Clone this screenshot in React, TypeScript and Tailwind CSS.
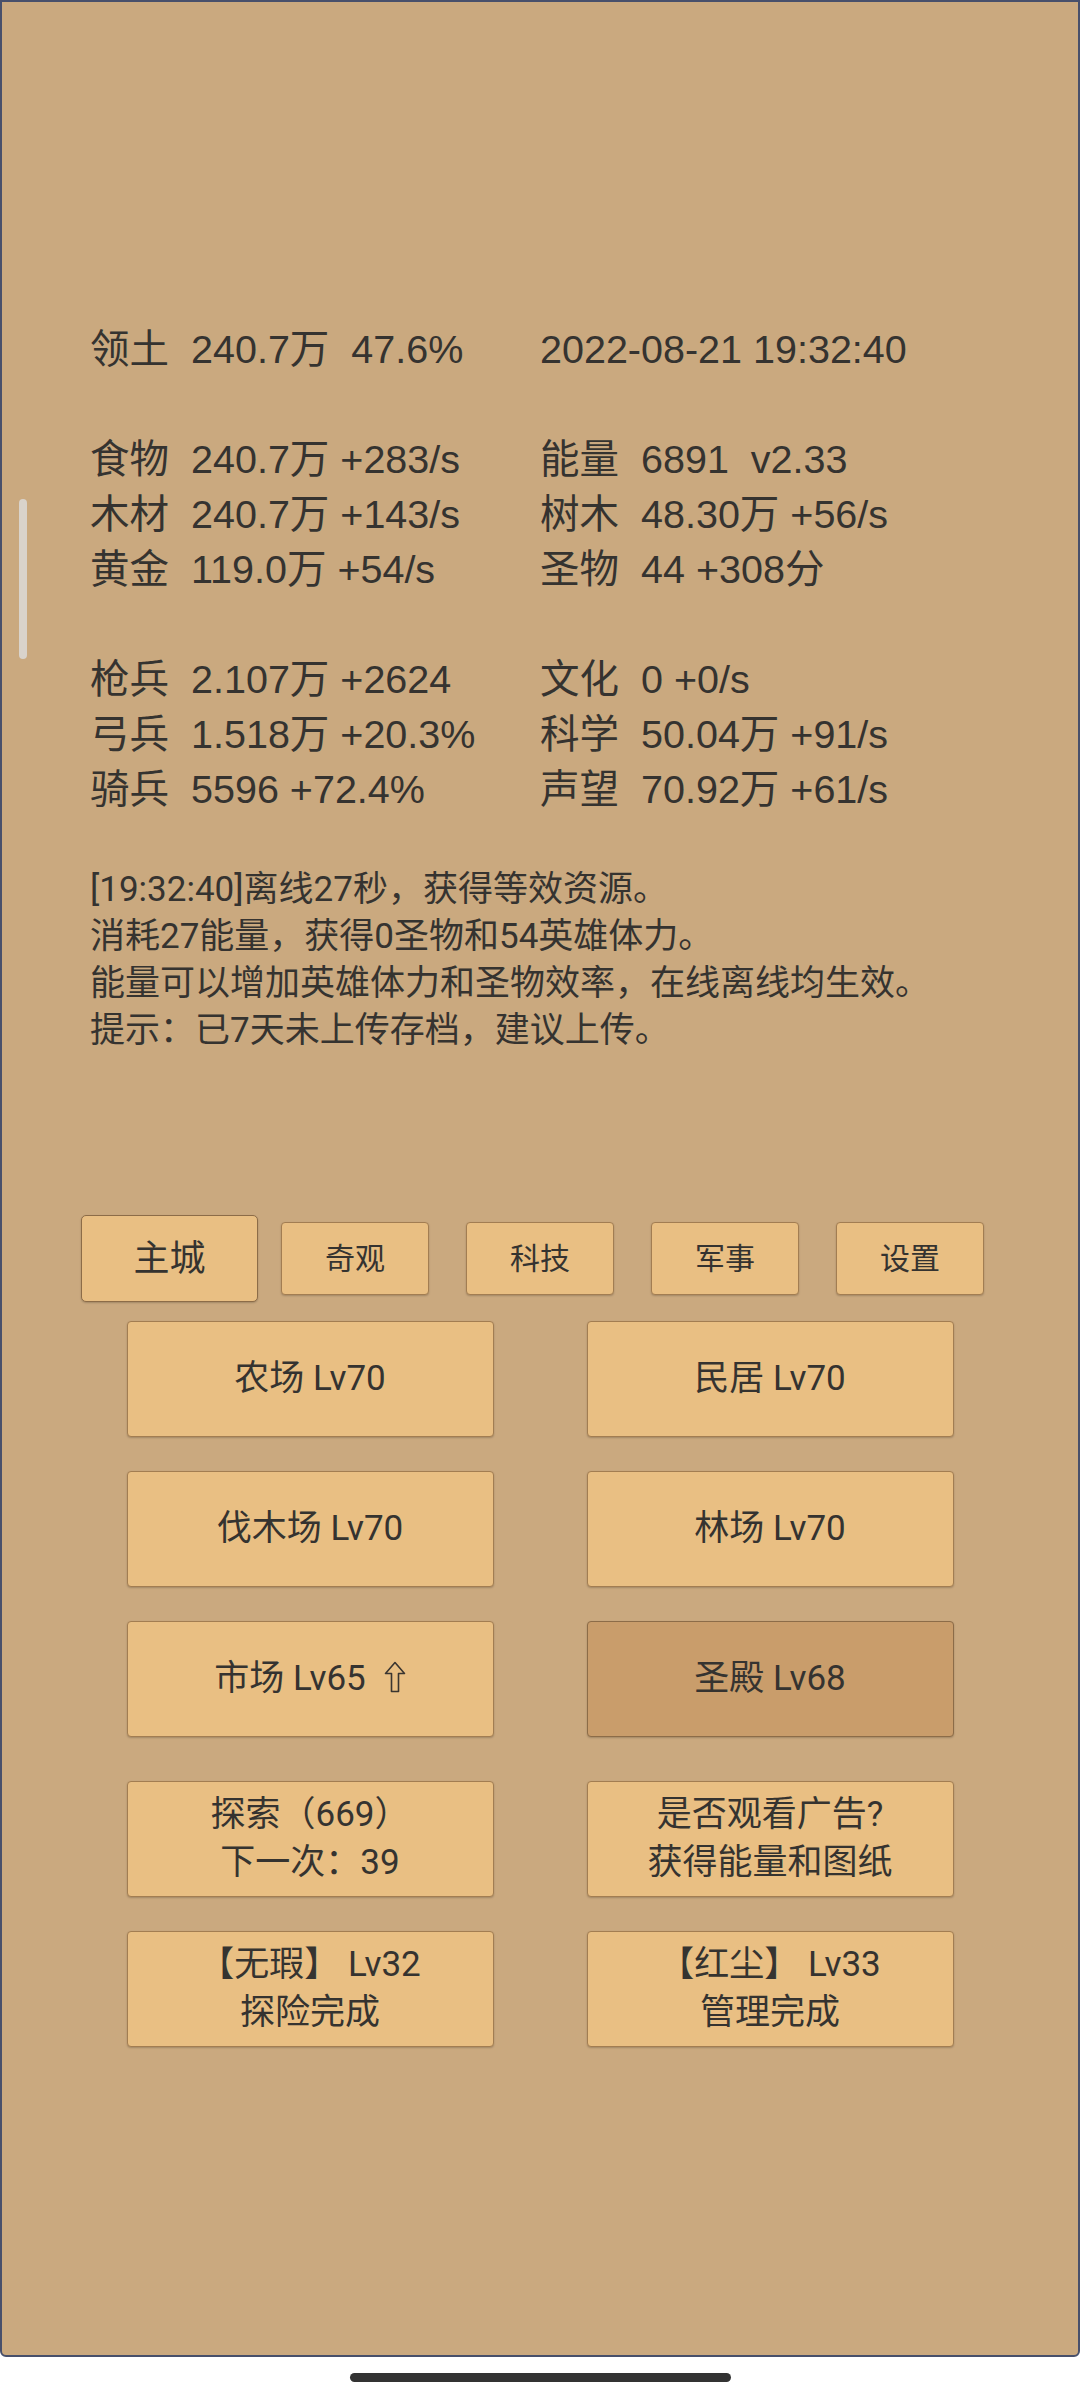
import { ReactNode } from 'react';

type Stat = { label?: string; value: string } | null;

const left: Stat[] = [
  { label: '领土', value: '240.7万  47.6%' },
  null,
  { label: '食物', value: '240.7万 +283/s' },
  { label: '木材', value: '240.7万 +143/s' },
  { label: '黄金', value: '119.0万 +54/s' },
  null,
  { label: '枪兵', value: '2.107万 +2624' },
  { label: '弓兵', value: '1.518万 +20.3%' },
  { label: '骑兵', value: '5596 +72.4%' },
];

const right: Stat[] = [
  { value: '2022-08-21 19:32:40' },
  null,
  { label: '能量', value: '6891  v2.33' },
  { label: '树木', value: '48.30万 +56/s' },
  { label: '圣物', value: '44 +308分' },
  null,
  { label: '文化', value: '0 +0/s' },
  { label: '科学', value: '50.04万 +91/s' },
  { label: '声望', value: '70.92万 +61/s' },
];

const logLines = [
  '[19:32:40]离线27秒，获得等效资源。',
  '消耗27能量，获得0圣物和54英雄体力。',
  '能量可以增加英雄体力和圣物效率，在线离线均生效。',
  '提示：已7天未上传存档，建议上传。',
];

const tabs = ['奇观', '科技', '军事', '设置'];

const UpArrow = () => (
  <svg width="22" height="32" viewBox="0 0 22 32" className="inline-block ml-[18px] -mt-[4px]">
    <path
      d="M11 1.5 L20.5 12.5 L14.5 12.5 L14.5 30.5 L7.5 30.5 L7.5 12.5 L1.5 12.5 Z"
      fill="none"
      stroke="#3a3530"
      strokeWidth="1.6"
      strokeLinejoin="round"
    />
  </svg>
);

const Cell = ({ stat }: { stat: Stat }) => {
  if (!stat) return <div className="h-[55px]" />;
  return (
    <div className="flex h-[55px] items-center whitespace-pre">
      {stat.label && <span className="w-[101px] shrink-0">{stat.label}</span>}
      <span>{stat.value}</span>
    </div>
  );
};

const BuildButton = ({
  children,
  active = false,
}: {
  children: ReactNode;
  active?: boolean;
}) => (
  <div
    className={
      active
        ? 'h-[116px] flex flex-col items-center justify-center rounded-[4px] border border-[#8c6c48] bg-[#c99d6b] text-[35px] leading-[48px] shadow-[0_1px_2px_rgba(0,0,0,0.2)]'
        : 'h-[116px] flex flex-col items-center justify-center rounded-[4px] border border-[#a27d52] bg-[#e9bf83] text-[35px] leading-[48px] shadow-[0_1px_2px_rgba(0,0,0,0.2)]'
    }
  >
    {children}
  </div>
);

const App = () => {
  return (
    <div className="relative min-h-[2400px] bg-white font-['Roboto','Noto_Sans_CJK_SC',sans-serif] text-[#353330]">
      <div className="relative h-[2357px] overflow-hidden rounded-b-[6px] border-2 border-[#48506b] bg-[#caa97f]">
        {/* scroll thumb */}
        <div className="absolute left-[17px] top-[497px] h-[160px] w-[8px] rounded-full bg-[#d9d3cb]" />

        <div className="pl-[88px] pt-[320px] font-['Liberation_Sans','Noto_Sans_CJK_SC',sans-serif] text-[39.5px]">
          {left.map((s, i) => (
            <div key={i} className="flex">
              <div className="w-[450px] shrink-0">
                <Cell stat={s} />
              </div>
              <Cell stat={right[i]} />
            </div>
          ))}
        </div>

        <div className="mt-[49px] pl-[88px] text-[35px] leading-[47px]">
          {logLines.map((l) => (
            <div key={l}>{l}</div>
          ))}
        </div>

        <div className="mt-[161px] flex items-center pl-[79px]">
          <div className="flex h-[87px] w-[177px] items-center justify-center rounded-[5px] border border-[#8c6c48] bg-[#e9bf83] text-[36px] shadow-[0_1px_2px_rgba(0,0,0,0.2)]">
            主城
          </div>
          <div className="ml-[23px] flex gap-[37px]">
            {tabs.map((t) => (
              <div
                key={t}
                className="flex h-[73px] w-[148px] items-center justify-center rounded-[4px] border border-[#a27d52] bg-[#e9bf83] text-[30px] shadow-[0_1px_2px_rgba(0,0,0,0.2)]"
              >
                {t}
              </div>
            ))}
          </div>
        </div>

        <div className="mx-auto mt-[19px] grid w-[827px] grid-cols-2 gap-x-[93px] gap-y-[34px]">
          <BuildButton>农场 Lv70</BuildButton>
          <BuildButton>民居 Lv70</BuildButton>
          <BuildButton>伐木场 Lv70</BuildButton>
          <BuildButton>林场 Lv70</BuildButton>
          <BuildButton>
            <span className="flex items-center">
              市场 Lv65
              <UpArrow />
            </span>
          </BuildButton>
          <BuildButton active>圣殿 Lv68</BuildButton>
        </div>

        <div className="mx-auto mt-[44px] grid w-[827px] grid-cols-2 gap-x-[93px] gap-y-[34px]">
          <BuildButton>
            <span>探索（669）</span>
            <span>下一次：39</span>
          </BuildButton>
          <BuildButton>
            <span>是否观看广告?</span>
            <span>获得能量和图纸</span>
          </BuildButton>
          <BuildButton>
            <span>【无瑕】 Lv32</span>
            <span>探险完成</span>
          </BuildButton>
          <BuildButton>
            <span>【红尘】 Lv33</span>
            <span>管理完成</span>
          </BuildButton>
        </div>
      </div>

      <div className="flex justify-center pt-[16px]">
        <div className="h-[9px] w-[381px] rounded-full bg-[#333333]" />
      </div>
    </div>
  );
};

export default App;
